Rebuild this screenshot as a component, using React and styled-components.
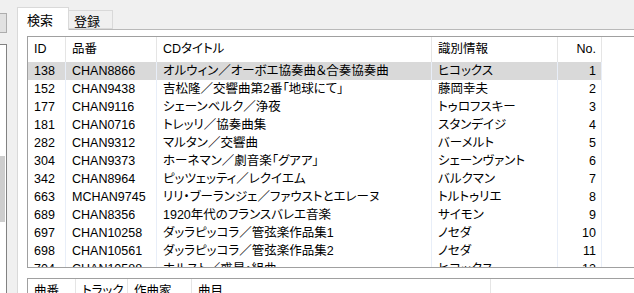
import React from "react";
import styled, { createGlobalStyle } from "styled-components";

const GlobalStyle = createGlobalStyle`
  html, body {
    margin: 0;
    padding: 0;
    background: #f0f0f0;
    overflow: hidden;
  }
  body {
    font-family: "Liberation Sans", "Noto Sans CJK JP", sans-serif;
    font-size: 12.5px;
    color: #000;
    font-feature-settings: "palt";
  }
`;

const Window = styled.div`
  display: flex;
  width: 634px;
  height: 293px;
  overflow: hidden;
`;

const SidePane = styled.div`
  width: 7px;
  flex: none;
  display: flex;
  flex-direction: column;
  padding-top: 13px;
`;

const SideButton = styled.div`
  height: 18px;
  border: 1px solid #adadad;
  border-left: none;
  background: #e1e1e1;
`;

const SideList = styled.div`
  margin-top: 11px;
  flex: 1;
  border-top: 1px solid #828282;
  border-right: 1px solid #828282;
  background: #fff;
  padding-top: 111px;
`;

const ScrollThumb = styled.div`
  width: 5px;
  height: 66px;
  background: #cdcdcd;
`;

const TabArea = styled.div`
  margin-left: 10px;
  padding-top: 7px;
  flex: 1;
  display: flex;
  flex-direction: column;
  min-width: 0;
`;

const TabStrip = styled.div`
  display: flex;
  align-items: flex-end;
  height: 22px;
  position: relative;
  z-index: 1;
`;

const Tab = styled.div`
  box-sizing: border-box;
  height: ${(p) => (p.$active ? "23px" : "19px")};
  margin-bottom: ${(p) => (p.$active ? "-1px" : "0")};
  padding: 0 ${(p) => (p.$active ? "9px" : "5px")};
  width: ${(p) => p.$w}px;
  border: 1px solid #d9d9d9;
  border-bottom: ${(p) => (p.$active ? "none" : "1px solid #d9d9d9")};
  border-left: ${(p) => (p.$first ? "1px solid #d9d9d9" : "none")};
  background: ${(p) => (p.$active ? "#fff" : "#f0f0f0")};
  display: flex;
  align-items: center;
  font-family: "Noto Sans CJK JP", sans-serif;
  font-size: 13px;
  line-height: 1;
  padding-top: ${(p) => (p.$active ? "0" : "2px")};
`;

const TabPage = styled.div`
  flex: 1;
  background: #fff;
  border-top: 1px solid #b9b9b9;
  border-left: 1px solid #d9d9d9;
  padding: 6px 0 0 9px;
  display: flex;
  flex-direction: column;
  gap: 10px;
`;

const ListView = styled.div`
  border: 1px solid #a0a0a0;
  border-right: none;
  background: #fff;
  height: ${(p) => p.$h}px;
  flex: none;
  overflow: hidden;
`;

const Row = styled.div`
  display: grid;
  grid-template-columns: ${(p) => p.$cols};
  height: ${(p) => (p.$header ? "25px" : "18px")};
`;

const Cell = styled.div`
  display: flex;
  align-items: center;
  justify-content: ${(p) => (p.$right ? "flex-end" : "flex-start")};
  padding: 0 ${(p) => (p.$right ? "5px" : "6px")};
  white-space: nowrap;
  overflow: hidden;
  line-height: 1;
  border-right: 1px solid ${(p) => (p.$header ? "#e5e5e5" : "#e8eef8")};
  background: ${(p) => (p.$selected ? "#d9d9d9" : "transparent")};
`;

const Filler = styled.div``;

const mainCols = "38px 91px 275px 126px 44px 1fr";
const subCols = "48px 52px 64px 299px 1fr";

const discs = [
  ["138", "CHAN8866", "オルウィン／オーボエ協奏曲＆合奏協奏曲", "ヒコックス", "1"],
  ["152", "CHAN9438", "吉松隆／交響曲第2番「地球にて」", "藤岡幸夫", "2"],
  ["177", "CHAN9116", "シェーンベルク／浄夜", "トゥロフスキー", "3"],
  ["181", "CHAN0716", "トレッリ／協奏曲集", "スタンデイジ", "4"],
  ["282", "CHAN9312", "マルタン／交響曲", "バーメルト", "5"],
  ["304", "CHAN9373", "ホーネマン／劇音楽「グアア」", "シェーンヴァント", "6"],
  ["342", "CHAN8964", "ピッツェッティ／レクイエム", "バルクマン", "7"],
  ["663", "MCHAN9745", "リリ・ブーランジェ／ファウストとエレーヌ", "トルトゥリエ", "8"],
  ["689", "CHAN8356", "1920年代のフランスバレエ音楽", "サイモン", "9"],
  ["697", "CHAN10258", "ダッラピッコラ／管弦楽作品集1", "ノセダ", "10"],
  ["698", "CHAN10561", "ダッラピッコラ／管弦楽作品集2", "ノセダ", "11"],
  ["704", "CHAN10588", "ホルスト／惑星・組曲", "ヒコックス", "12"],
];

export default function App() {
  return (
    <>
      <GlobalStyle />
      <Window>
        <SidePane>
          <SideButton />
          <SideList>
            <ScrollThumb />
          </SideList>
        </SidePane>
        <TabArea>
          <TabStrip>
            <Tab $active $first $w={52}>検索</Tab>
            <Tab $w={44}>登録</Tab>
          </TabStrip>
          <TabPage>
            <ListView $h={230}>
              <Row $header $cols={mainCols}>
                <Cell $header>ID</Cell>
                <Cell $header>品番</Cell>
                <Cell $header>CDタイトル</Cell>
                <Cell $header>識別情報</Cell>
                <Cell $header $right>No.</Cell>
                <Filler />
              </Row>
              {discs.map((d, i) => (
                <Row key={d[0]} $cols={mainCols}>
                  <Cell $selected={i === 0}>{d[0]}</Cell>
                  <Cell $selected={i === 0}>{d[1]}</Cell>
                  <Cell $selected={i === 0}>{d[2]}</Cell>
                  <Cell $selected={i === 0}>{d[3]}</Cell>
                  <Cell $selected={i === 0} $right>{d[4]}</Cell>
                  <Filler />
                </Row>
              ))}
            </ListView>
            <ListView $h={60}>
              <Row $header $cols={subCols}>
                <Cell $header>曲番</Cell>
                <Cell $header>トラック</Cell>
                <Cell $header>作曲家</Cell>
                <Cell $header>曲目</Cell>
                <Filler />
              </Row>
            </ListView>
          </TabPage>
        </TabArea>
      </Window>
    </>
  );
}
